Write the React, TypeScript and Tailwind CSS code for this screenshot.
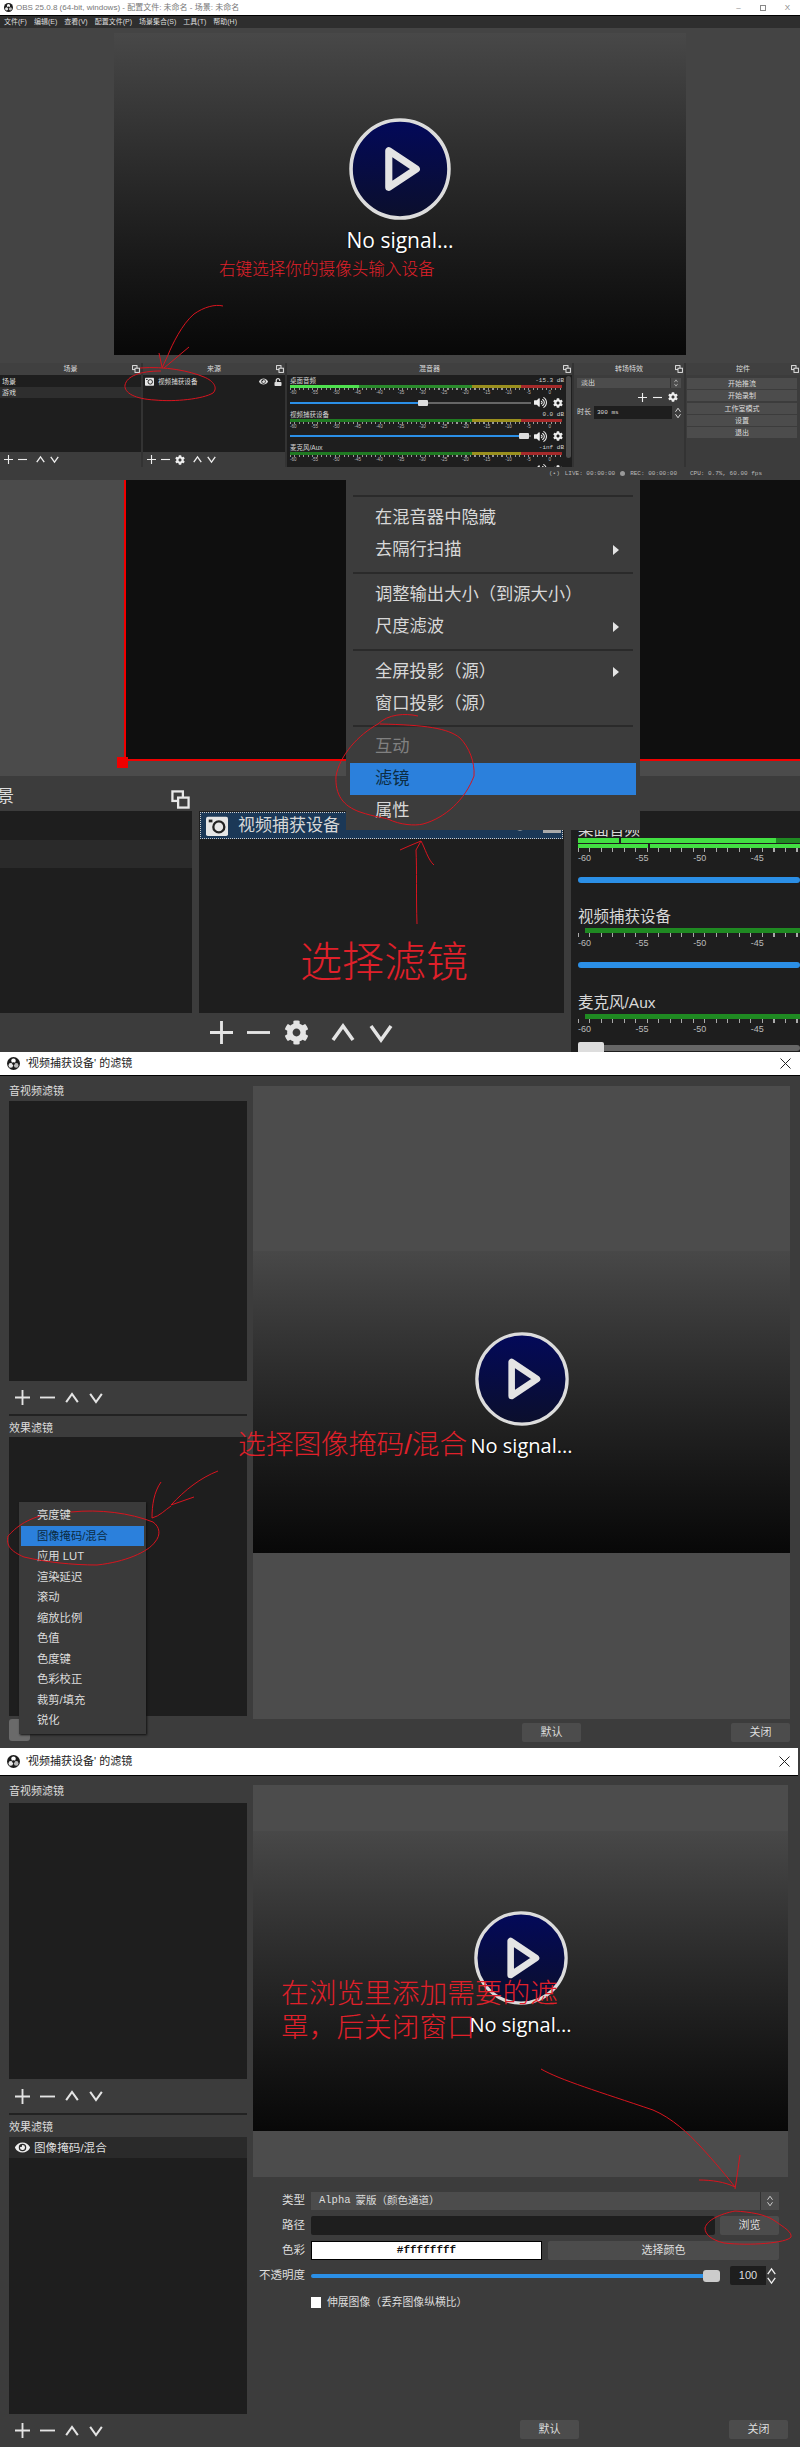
import { FaCog, FaVolumeUp, FaEye, FaUnlock } from "react-icons/fa"

const levels = ["-60", "-55", "-50", "-45", "-40", "-35", "-30", "-25", "-20", "-15", "-10", "-5", "0"]
const effects = ["亮度键", "图像掩码/混合", "应用 LUT", "渲染延迟", "滚动", "缩放比例", "色值", "色度键", "色彩校正", "裁剪/填充", "锐化"]

const Plus = ({ s = 10 }: { s?: number }) => (
  <svg width={s} height={s} viewBox="0 0 24 24" stroke="currentColor" strokeWidth="3" fill="none">
    <path d="M12 0v24M0 12h24" />
  </svg>
)
const Minus = ({ s = 10 }: { s?: number }) => (
  <svg width={s} height={s} viewBox="0 0 24 24" stroke="currentColor" strokeWidth="3" fill="none">
    <path d="M0 12h24" />
  </svg>
)
const Up = ({ s = 10 }: { s?: number }) => (
  <svg width={s} height={s} viewBox="0 0 24 24" stroke="currentColor" strokeWidth="3.5" fill="none">
    <path d="M2 19 12 5l10 14" />
  </svg>
)
const Down = ({ s = 10 }: { s?: number }) => (
  <svg width={s} height={s} viewBox="0 0 24 24" stroke="currentColor" strokeWidth="3.5" fill="none">
    <path d="M2 5l10 14L22 5" />
  </svg>
)
const Float = ({ s = 8 }: { s?: number }) => (
  <svg width={s} height={s} viewBox="0 0 20 20" fill="none" stroke="#e8e8e8" strokeWidth="2.4">
    <rect x="1.5" y="1.5" width="11" height="10" fill="#3c3c3c" />
    <rect x="7.5" y="8" width="11" height="10.5" fill="#3c3c3c" />
  </svg>
)
const Camera = ({ s = 10 }: { s?: number }) => (
  <svg width={s} height={s} viewBox="0 0 24 24">
    <rect x="0" y="2" width="24" height="21" rx="2" fill="#e6e6e6" />
    <circle cx="14" cy="13" r="6" fill="none" stroke="#222" strokeWidth="2.5" />
    <rect x="3" y="5" width="4" height="3" fill="#222" />
  </svg>
)
const ObsMark = ({ s = 12 }: { s?: number }) => (
  <svg width={s} height={s} viewBox="0 0 24 24">
    <circle cx="12" cy="12" r="12" fill="#1c1c1c" />
    <circle cx="12" cy="7" r="4.2" fill="#fff" />
    <circle cx="7" cy="15.5" r="4.2" fill="#e8e8e8" />
    <circle cx="17" cy="15.5" r="4.2" fill="#bbb" />
    <circle cx="12" cy="12" r="2.4" fill="#1c1c1c" />
  </svg>
)

const PlayLogo = ({ s }: { s: number }) => (
  <svg width={s} height={s} viewBox="0 0 100 100" className="shrink-0">
    <defs>
      <linearGradient id="navy" x1="0" y1="0" x2="0" y2="1">
        <stop offset="0" stopColor="#03095a" />
        <stop offset="1" stopColor="#0b0f2c" />
      </linearGradient>
    </defs>
    <circle cx="50" cy="50" r="48" fill="url(#navy)" stroke="#dcdcdc" strokeWidth="3.5" />
    <path d="M39 32v36l27-18z" fill="#0a0f44" stroke="#e4e4e4" strokeWidth="7" strokeLinejoin="round" />
  </svg>
)

function Video({ h, s, pt, fs }: { h: number; s: number; pt: string; fs: string }) {
  return (
    <div
      className={`flex flex-col items-center bg-gradient-to-b from-[#484848] to-[#080808] font-['Open_Sans',sans-serif] text-white ${pt}`}
      style={{ height: h }}
    >
      <PlayLogo s={s} />
      <div className={`mt-[6px] h-[28px] leading-[28px] [text-shadow:0_0_2px_#000] ${fs}`}>No signal...</div>
    </div>
  )
}

function SmallDock({ title, w, children }: { title: string; w: string; children: React.ReactNode }) {
  return (
    <div className={`flex h-full shrink-0 flex-col ${w}`}>
      <div className="relative h-[12px] bg-[#404040] text-center text-[7px] leading-[12px] text-[#dcdcdc]">
        {title}
        <span className="absolute right-[1px] top-[2px]">
          <Float />
        </span>
      </div>
      {children}
    </div>
  )
}

function MiniRow({ name, val, knob, first }: { name: string; val: string; knob: number; first?: boolean }) {
  return (
    <div className="h-[33.5px] shrink-0 px-[3px]">
      <div className="flex h-[9px] items-center justify-between pr-[5px] text-[6.5px] leading-[9px] text-[#d4d4d4]">
        <span>{name}</span>
        <span className="font-['Liberation_Mono',monospace] text-[6px]">{val}</span>
      </div>
      <div className="flex h-[3px] w-[272px]">
        <div className={`relative w-[182px] ${first ? "bg-[#2a8a2c]" : "bg-[#1f7a22]"}`}>
          {first && <div className="absolute inset-y-0 left-0 w-[69px] bg-[#4ee04e]" />}
        </div>
        <div className="w-[49px] bg-[#9a8f1e]" />
        <div className="w-[41px] bg-[#a52a2a]" />
      </div>
      <div className="h-[2px] w-[272px] bg-[repeating-linear-gradient(90deg,#999_0,#999_1px,transparent_1px,transparent_4.5px)]" />
      <div className="flex w-[280px] text-[4.5px] leading-[6px] text-[#bbb]">
        {levels.map((l) => (
          <span key={l} className="w-[22.5px]">
            {l}
          </span>
        ))}
      </div>
      <div className="flex items-center gap-[3px] text-[#eee]">
        <div className="relative h-[2px] w-[241px] bg-[#666]">
          <div className="h-full bg-[#2b8fe6]" style={{ width: knob }} />
          <div className="absolute top-[-2px] h-[6px] w-[10px] rounded-[1px] bg-[#ddd]" style={{ left: knob - 2 }} />
        </div>
        <FaVolumeUp size={13} />
        <FaCog size={10} className="ml-[3px]" />
      </div>
    </div>
  )
}

function MainWindow() {
  const menus = ["文件(F)", "编辑(E)", "查看(V)", "配置文件(P)", "场景集合(S)", "工具(T)", "帮助(H)"]
  return (
    <section className="flex h-[480px] flex-col bg-[#3c3c3c]">
      <div className="flex h-[15px] shrink-0 items-center bg-white px-[4px] text-[8px] text-[#777]">
        <ObsMark s={9} />
        <span className="ml-[3px]">OBS 25.0.8 (64-bit, windows) - 配置文件: 未命名 - 场景: 未命名</span>
        <span className="ml-auto flex items-center gap-[19px] pr-[6px] text-[8px] text-[#888]">
          <span>–</span>
          <span className="h-[6px] w-[6px] border border-[#888]" />
          <span>X</span>
        </span>
      </div>
      <div className="h-[1px] shrink-0 bg-black" />
      <div className="flex h-[12px] shrink-0 gap-[7px] bg-[#2e2e2e] px-[4px] text-[7px] leading-[12px] text-[#ddd]">
        {menus.map((m) => (
          <span key={m}>{m}</span>
        ))}
      </div>
      <div className="h-[335px] shrink-0 bg-[#444] pt-[5px]">
        <div className="mx-auto w-[572px]">
          <Video h={322} s={102} pt="pt-[85px]" fs="text-[21px]" />
        </div>
      </div>
      <div className="flex h-[104px] shrink-0 gap-[2px] bg-[#333]">
        <SmallDock title="场景" w="w-[141px]">
          <div className="h-[78px] bg-[#1e1e1e] pl-[2px] pt-[1px] text-[7px] text-[#ddd]">
            <div className="h-[11px] leading-[11px]">场景</div>
            <div className="-ml-[2px] h-[11px] bg-[#2e2e2e] pl-[2px] leading-[11px]">游戏</div>
          </div>
          <div className="flex h-[15px] items-center gap-[5px] bg-[#3c3c3c] pl-[4px] text-[#eee]">
            <Plus s={9} />
            <Minus s={9} />
            <span className="ml-[4px]"><Up s={9} /></span>
            <Down s={9} />
          </div>
        </SmallDock>
        <SmallDock title="来源" w="w-[142px]">
          <div className="h-[78px] bg-[#1e1e1e] px-[2px] pt-[1px] text-[6.6px] text-[#ddd]">
            <div className="flex h-[11px] items-center gap-[3px]">
              <Camera s={9} />
              <span className="ml-[1px]">视频捕获设备</span>
              <span className="ml-auto mr-[1px] flex items-center gap-[6px] text-[#ddd]">
                <FaEye size={9} />
                <FaUnlock size={8} />
              </span>
            </div>
          </div>
          <div className="flex h-[15px] items-center gap-[5px] bg-[#3c3c3c] pl-[4px] text-[#eee]">
            <Plus s={9} />
            <Minus s={9} />
            <FaCog size={10} />
            <span className="ml-[3px]"><Up s={9} /></span>
            <Down s={9} />
          </div>
        </SmallDock>
        <SmallDock title="混音器" w="w-[285px]">
          <div className="relative h-[92px] overflow-hidden bg-[#1e1e1e] pt-[1px]">
            <MiniRow name="桌面音频" val="-15.3 dB" knob={130} first />
            <MiniRow name="视频捕获设备" val="0.0 dB" knob={231} />
            <MiniRow name="麦克风/Aux" val="-inf dB" knob={1} />
            <div className="absolute right-[1px] top-[1px] h-[82px] w-[5px] rounded-[3px] bg-[#4c4c4c]" />
          </div>
        </SmallDock>
        <SmallDock title="转场特效" w="w-[110px]">
          <div className="flex-1 bg-[#3c3c3c] px-[3px] pt-[3px] text-[7px] text-[#ddd]">
            <div className="flex h-[10px] bg-[#4c4c4c]">
              <span className="flex-1 pl-[4px] leading-[10px]">淡出</span>
              <span className="flex w-[11px] flex-col items-center justify-center border-l border-[#333] text-[#ddd]">
                <Up s={4} />
                <Down s={4} />
              </span>
            </div>
            <div className="mt-[4px] flex h-[10px] items-center justify-end gap-[6px] pr-[3px] text-[#eee]">
              <Plus s={9} />
              <Minus s={9} />
              <FaCog size={10} />
            </div>
            <div className="mt-[4px] flex h-[13px] items-center gap-[3px]">
              <span>时长</span>
              <div className="flex h-full flex-1 items-center bg-[#1e1e1e] pl-[3px] font-['Liberation_Mono',monospace] text-[6px]">300 ms</div>
              <span className="flex flex-col text-[#eee]">
                <Up s={6} />
                <Down s={6} />
              </span>
            </div>
          </div>
        </SmallDock>
        <SmallDock title="控件" w="w-[114px]">
          <div className="flex flex-1 flex-col gap-[1.3px] bg-[#3c3c3c] pl-[1px] pr-[3px] pt-[3px] text-[7px] text-[#ddd]">
            {["开始推流", "开始录制", "工作室模式", "设置", "退出"].map((b) => (
              <div key={b} className="h-[11px] bg-[#4c4c4c] text-center leading-[11px]">
                {b}
              </div>
            ))}
          </div>
        </SmallDock>
      </div>
      <div className="flex h-[13px] items-center justify-end gap-[5px] bg-[#3c3c3c] pr-[38px] font-['Liberation_Mono',monospace] text-[6px] text-[#bbb]">
        <span>(•)</span>
        <span>LIVE: 00:00:00</span>
        <span className="h-[5px] w-[5px] rounded-full bg-[#999]" />
        <span>REC: 00:00:00</span>
        <span className="ml-[8px]">CPU: 0.7%, 60.00 fps</span>
      </div>
    </section>
  )
}

function BigRow({ name, muted, mt, first }: { name: string; muted?: boolean; mt: string; first?: boolean }) {
  return (
    <div className="h-[86.5px] shrink-0">
      <div className="ml-[7px] h-[20px] whitespace-nowrap text-[15.5px] leading-[20px] text-[#d8d8d8]">{name}</div>
      {first ? (
        <div className="ml-[7px] -mt-[2px] flex h-[10px] flex-col gap-[1px]">
          <div className="flex h-[5px]">
            <div className="w-[41px] bg-[#42e042]" />
            <div className="ml-[2px] w-[155px] bg-[#42e042]" />
            <div className="flex-1 bg-[#1f8a22]" />
          </div>
          <div className="flex h-[4px]">
            <div className="w-[70px] bg-[#42e042]" />
            <div className="ml-[2px] flex-1 bg-[#42e042]" />
          </div>
        </div>
      ) : (
        <div className="ml-[14px] mt-[1px] h-[5px] bg-[#1f8a22]" />
      )}
      <div className="ml-[7px] h-[4px] bg-[repeating-linear-gradient(90deg,#aaa_0,#aaa_1px,transparent_1px,transparent_11.5px)]" />
      <div className="ml-[7px] flex h-[10px] pt-[1px] text-[9px] leading-[10px] text-[#bbb]">
        {levels.slice(0, 4).map((l) => (
          <span key={l} className="w-[57.6px] shrink-0">
            {l}
          </span>
        ))}
      </div>
      <div className={`relative ml-[7px] h-[6px] rounded-[3px] ${mt} ${muted ? "bg-[#666]" : "bg-[#2b8fe6]"}`}>
        {muted && <div className="absolute left-0 top-[-3px] h-[12px] w-[26px] rounded-[2px] bg-[#ddd]" />}
      </div>
    </div>
  )
}

function ContextMenu() {
  const Sep = ({ cls = "my-[5.5px]" }: { cls?: string }) => <div className={`mx-[7px] h-[2px] bg-[#2a2a2a] ${cls}`} />
  const Item = ({ t, arrow, cls = "text-[#d8d8d8]" }: { t: string; arrow?: boolean; cls?: string }) => (
    <div className={`relative flex h-[32px] items-center pl-[29px] text-[17.3px] ${cls}`}>
      {t}
      {arrow && <span className="absolute right-[21px] h-0 w-0 border-y-[5px] border-l-[6px] border-y-transparent border-l-[#e4e4e4]" />}
    </div>
  )
  return (
    <div className="absolute left-[346px] top-0 h-[350px] w-[294px] bg-[#3c3c3c] pt-[9px]">
      <Sep />
      <Item t="在混音器中隐藏" />
      <Item t="去隔行扫描" arrow />
      <Sep />
      <Item t="调整输出大小（到源大小）" />
      <Item t="尺度滤波" arrow />
      <Sep />
      <Item t="全屏投影（源）" arrow />
      <Item t="窗口投影（源）" />
      <Sep cls="my-[4.5px]" />
      <Item t="互动" cls="text-[#808080]" />
      <div className="mx-[4px] flex h-[32px] items-center bg-[#2b80dc] pl-[25px] text-[17.3px] text-[#0c2c44]">滤镜</div>
      <Item t="属性" />
    </div>
  )
}

function ZoomedWindow() {
  return (
    <section className="relative flex h-[572px] flex-col overflow-hidden bg-[#3c3c3c]">
      <div className="relative h-[296px] shrink-0 bg-[#4b4b4b] pl-[124px]">
        <div className="h-[281px] border-b-[2px] border-l-[2px] border-[#f00000] bg-[#0f0f0f]" />
        <div className="absolute left-[117px] top-[277px] h-[11px] w-[11px] bg-[#f00000]" />
      </div>
      <div className="mt-[6px] flex h-[270px] gap-[7px]">
        <div className="flex w-[192px] shrink-0 flex-col">
          <div className="relative h-[29px] overflow-hidden bg-[#3c3c3c] text-[17px] leading-[29px] text-[#ddd]">
            <span className="absolute -left-[3px]">景</span>
            <span className="absolute right-[2px] top-[8px]"><Float s={19} /></span>
          </div>
          <div className="h-[202px] bg-[#1e1e1e] pt-[29px]">
            <div className="h-[28px] bg-[#2a2a2a]" />
          </div>
          <div className="h-[39px] bg-[#3c3c3c]" />
        </div>
        <div className="flex w-[365px] shrink-0 flex-col">
          <div className="h-[29px] bg-[#3c3c3c]" />
          <div className="h-[202px] bg-[#1e1e1e] p-[1px]">
            <div className="flex h-[27px] items-center border border-dotted border-[#ccc] bg-[#1b3857] pl-[5px] text-[17px] text-[#d8d8d8]">
              <Camera s={22} />
              <span className="ml-[10px]">视频捕获设备</span>
              <span className="ml-auto mr-[1px] flex items-center gap-[16px] text-[#aaa]">
                <FaEye size={14} />
                <span className="h-[14px] w-[18px] bg-[#aaa]" />
              </span>
            </div>
          </div>
          <div className="flex h-[39px] items-center gap-[14px] bg-[#3c3c3c] pl-[11px] text-[#e4e4e4]">
            <Plus s={23} />
            <Minus s={23} />
            <FaCog size={25} />
            <span className="ml-[8px]"><Up s={24} /></span>
            <Down s={24} />
          </div>
        </div>
        <div className="flex w-[229px] shrink-0 flex-col">
          <div className="h-[29px] bg-[#3c3c3c]" />
          <div className="flex-1 overflow-hidden bg-[#1e1e1e] pt-[9px]">
            <BigRow name="桌面音频" mt="mt-[15px]" first />
            <BigRow name="视频捕获设备" mt="mt-[15px]" />
            <BigRow name="麦克风/Aux" mt="mt-[12px]" muted />
          </div>
        </div>
      </div>
      <ContextMenu />
    </section>
  )
}

function ListTools({ cls }: { cls: string }) {
  return (
    <div className={`flex items-center gap-[10px] pl-[6px] text-[#e4e4e4] ${cls}`}>
      <Plus s={15} />
      <Minus s={15} />
      <Up s={14} />
      <Down s={14} />
    </div>
  )
}

function DialogButtons({ ml }: { ml: string }) {
  return (
    <div className={`mt-auto flex justify-between text-[11px] text-[#ddd] ${ml}`}>
      <span className="h-[19px] w-[59px] rounded-[2px] bg-[#4c4c4c] text-center leading-[19px]">默认</span>
      <span className="h-[19px] w-[59px] rounded-[2px] bg-[#4c4c4c] text-center leading-[19px]">关闭</span>
    </div>
  )
}

function TitleBar({ h, closeR }: { h: string; closeR: string }) {
  return (
    <div className={`flex shrink-0 items-center border-b border-black bg-white pl-[7px] text-[11px] text-[#222] ${h} ${closeR}`}>
      <ObsMark s={13} />
      <span className="ml-[6px]">'视频捕获设备' 的滤镜</span>
      <svg width="11" height="11" viewBox="0 0 11 11" className="ml-auto" stroke="#222" fill="none">
        <path d="M.5.5l10 10M10.5.5l-10 10" />
      </svg>
    </div>
  )
}

function FilterDialog() {
  return (
    <section className="relative flex h-[696px] flex-col bg-[#3c3c3c]">
      <TitleBar h="h-[24px]" closeR="pr-[9px]" />
      <div className="flex flex-1 gap-[6px] pl-[9px] pr-[10px]">
        <div className="flex w-[238px] shrink-0 flex-col text-[11px] text-[#ddd]">
          <div className="h-[25px] pt-[4px] leading-[22px]">音视频滤镜</div>
          <div className="h-[280px] bg-[#1e1e1e]" />
          <ListTools cls="h-[33px]" />
          <div className="h-[2px] bg-[#222]" />
          <div className="h-[21px] leading-[24px]">效果滤镜</div>
          <div className="h-[279px] bg-[#1e1e1e]" />
        </div>
        <div className="flex flex-1 flex-col pb-[6px] pt-[10px]">
          <div className="h-[633px] bg-[#4c4c4c] pt-[165px]">
            <Video h={302} s={94} pt="pt-[81px]" fs="text-[20px]" />
          </div>
          <DialogButtons ml="ml-[269px]" />
        </div>
      </div>
      <div className="absolute left-[19px] top-[450px] z-10 w-[127px] bg-[#3a3a3a] py-[3px] text-[11.3px] text-[#ddd] shadow-[1px_1px_2px_#111]">
        {effects.map((e) => (
          <div key={e} className={`mx-[2px] h-[20.5px] pl-[16px] leading-[20.5px] ${e === "图像掩码/混合" ? "bg-[#2b80dc] text-[#0c2c44]" : ""}`}>
            {e}
          </div>
        ))}
      </div>
      <div className="absolute left-[9px] top-[667px] h-[22px] w-[21px] rounded-[3px] bg-[#6a6a6a]" />
    </section>
  )
}

function PropRow({ label, children }: { label: string; children: React.ReactNode }) {
  return (
    <div className="flex items-center gap-[6px]">
      <span className="w-[52px] text-right text-[11.5px] text-[#ddd]">{label}</span>
      <div className="flex w-[468px]">{children}</div>
    </div>
  )
}

function MaskDialog() {
  return (
    <section className="relative flex h-[699px] flex-col bg-[#3c3c3c]">
      <TitleBar h="h-[28px]" closeR="pr-[10px]" />
      <div className="flex flex-1 gap-[6px] pl-[9px] pr-[12px]">
        <div className="flex w-[238px] shrink-0 flex-col text-[11px] text-[#ddd]">
          <div className="h-[27px] leading-[30px]">音视频滤镜</div>
          <div className="h-[276px] bg-[#1e1e1e]" />
          <ListTools cls="h-[34px]" />
          <div className="h-[2px] bg-[#222]" />
          <div className="h-[22px] leading-[24px]">效果滤镜</div>
          <div className="h-[277px] bg-[#1e1e1e]">
            <div className="flex h-[21px] items-center bg-[#2a2a2a] pl-[6px]">
              <FaEye size={15} className="text-[#eee]" />
              <span className="ml-[4px] text-[11.6px]">图像掩码/混合</span>
            </div>
          </div>
          <ListTools cls="h-[33px]" />
        </div>
        <div className="flex flex-1 flex-col pb-[8px] pt-[9px]">
          <div className="h-[392px] bg-[#4c4c4c] pt-[46px]">
            <Video h={300} s={94} pt="pt-[80px]" fs="text-[20px]" />
          </div>
          <div className="mt-[15px] flex flex-col gap-[6px] text-[11px] text-[#ddd]">
            <PropRow label="类型">
              <div className="flex h-[18px] w-full items-center bg-[#4c4c4c] pl-[8px] text-[10.5px]">
                <span className="font-['Liberation_Mono',monospace]">Alpha</span>
                <span className="ml-[5px]">蒙版（颜色通道）</span>
                <span className="ml-auto flex h-full w-[19px] flex-col items-center justify-center border-l border-[#333]">
                  <Up s={6} />
                  <Down s={6} />
                </span>
              </div>
            </PropRow>
            <PropRow label="路径">
              <div className="h-[19px] flex-1 rounded-[2px] bg-[#1e1e1e]" />
              <div className="ml-[5px] h-[19px] w-[59px] rounded-[2px] bg-[#4c4c4c] text-center leading-[19px]">浏览</div>
            </PropRow>
            <PropRow label="色彩">
              <div className="h-[19px] w-[231px] border border-black bg-white text-center font-['Liberation_Mono',monospace] text-[11px] font-bold leading-[17px] text-[#111]">#ffffffff</div>
              <div className="ml-[6px] h-[19px] flex-1 rounded-[2px] bg-[#4c4c4c] text-center leading-[19px]">选择颜色</div>
            </PropRow>
            <PropRow label="不透明度">
              <div className="relative mr-[10px] h-[4px] w-[409px] self-center rounded-[2px] bg-[#2b8fe6]">
                <div className="absolute right-0 top-[-4px] h-[12px] w-[17px] rounded-[3px] bg-[#ccc]" />
              </div>
              <div className="h-[19px] w-[36px] rounded-l-[2px] bg-[#1e1e1e] text-center text-[11px] leading-[19px]">100</div>
              <span className="ml-[1px] flex flex-col items-center justify-center text-[#eee]">
                <Up s={9} />
                <Down s={9} />
              </span>
            </PropRow>
            <div className="mt-[3px] flex items-center pl-[58px]">
              <span className="h-[11px] w-[10px] bg-white" />
              <span className="ml-[6px] text-[10.8px]">伸展图像（丢弃图像纵横比）</span>
            </div>
          </div>
          <DialogButtons ml="ml-[267px]" />
        </div>
      </div>
      <span className="absolute right-0 top-0 h-[28px] w-[2px] bg-[#3c3c3c]" />
    </section>
  )
}

// annotations drawn in red over the screenshots
function Scribbles() {
  return (
    <svg width="800" height="2447" viewBox="0 0 800 2447" fill="none" stroke="#d8141e" strokeWidth="1" className="pointer-events-none absolute left-0 top-0 z-20">
      <path d="M223 306C215 304 204 307 194 314 182 324 172 345 168 355L162 368M189 347 164 368M159 353 162 367" />
      <path d="M140 368C165 366 190 371 204 377 214 381 218 388 213 393 203 399 175 402 155 400 135 399 124 393 125 385 127 376 140 371 161 371" />
      <path d="M418 716C405 713 388 714 378 724 358 735 340 755 336 776 335 795 343 806 360 812 375 817 385 818 388 819 400 825 415 826 423 824 445 818 465 800 474 776 475 762 469 747 460 738 448 728 425 725 380 724" />
      <path d="M417 924C416 895 417 870 416 850L421 841M400 850 409 846 421 841C425 848 428 860 434 865" />
      <path d="M218 1471C200 1478 185 1490 171 1505M194 1497 171 1505M161 1482C154 1492 152 1505 152 1518 160 1516 165 1510 171 1506" />
      <path d="M71 1512C100 1509 130 1513 153 1522 160 1527 161 1535 155 1542 148 1552 125 1562 97 1565 72 1565 45 1562 24 1557 10 1551 6 1545 8 1536 12 1532 20 1522 40 1516 71 1512Z" />
      <path d="M541 2069C560 2080 600 2092 653 2110 672 2118 689 2134 700 2146 715 2162 728 2178 735 2187M740 2155C738 2168 737 2178 735 2189M699 2180C712 2180 725 2182 735 2187" />
      <path d="M735 2211C750 2212 765 2214 775 2221 785 2228 792 2232 791 2237 787 2243 750 2246 724 2243 712 2240 705 2235 705 2228 707 2220 720 2214 735 2211Z" />
    </svg>
  )
}

export default function App() {
  return (
    <div className="relative h-[2447px] w-[800px] overflow-hidden bg-[#3c3c3c] font-['Liberation_Sans','Noto_Sans_CJK_SC',sans-serif]">
      <MainWindow />
      <ZoomedWindow />
      <FilterDialog />
      <MaskDialog />
      <Scribbles />
      <div className="absolute left-[219px] top-[258px] z-20 text-[16.6px] font-light leading-[24px] text-[#e0202a]">右键选择你的摄像头输入设备</div>
      <div className="absolute left-[300px] top-[933px] z-20 text-[42px] font-light leading-[60px] text-[#e0202a]">选择滤镜</div>
      <div className="absolute left-[238px] top-[1425px] z-20 text-[27.7px] font-light leading-[40px] text-[#e0202a]">选择图像掩码/混合</div>
      <div className="absolute left-[281px] top-[1977px] z-20 w-[285px] text-[27.7px] font-light leading-[34px] text-[#e0202a]">
        在浏览里添加需要的遮罩，后关闭窗口
      </div>
    </div>
  )
}
